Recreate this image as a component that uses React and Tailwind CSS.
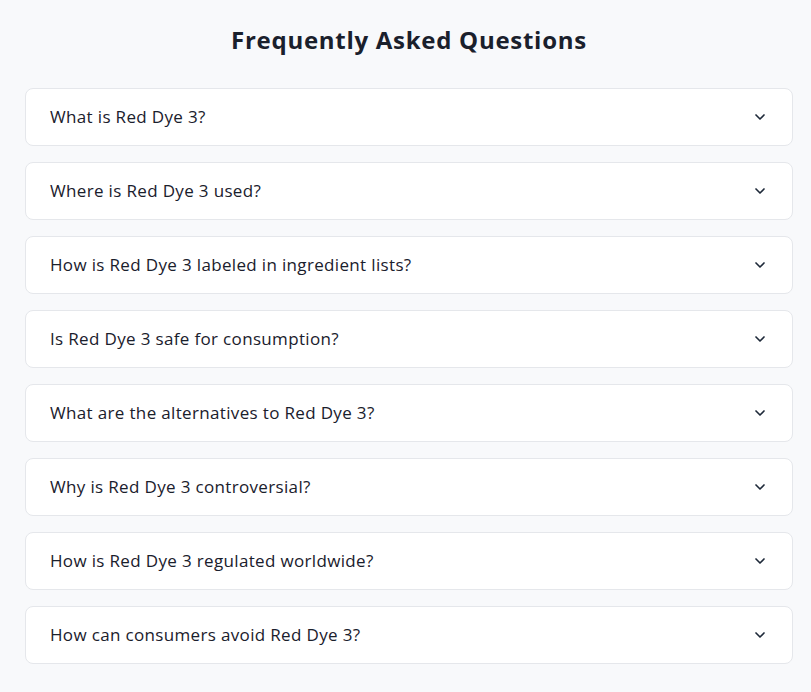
import { ChevronDown } from 'lucide-react';

const questions = [
  'What is Red Dye 3?',
  'Where is Red Dye 3 used?',
  'How is Red Dye 3 labeled in ingredient lists?',
  'Is Red Dye 3 safe for consumption?',
  'What are the alternatives to Red Dye 3?',
  'Why is Red Dye 3 controversial?',
  'How is Red Dye 3 regulated worldwide?',
  'How can consumers avoid Red Dye 3?',
];

export default function App() {
  return (
    <div className="min-h-screen bg-[#f8f9fb] pt-6 pb-8 pl-[25px] pr-[18px] font-['Open_Sans',sans-serif]">
      <h1 className="mb-8 text-center text-2xl font-bold tracking-[0.03em] text-[#1a202c]">Frequently Asked Questions</h1>
      <div className="flex flex-col gap-4">
        {questions.map((q) => (
          <button
            key={q}
            className="flex w-full items-center justify-between rounded-lg border border-gray-200 bg-white px-6 py-4 text-left"
          >
            <span className="text-[17px] leading-6 font-medium tracking-[0.02em] text-[#1a202c]">{q}</span>
            <ChevronDown size={16} strokeWidth={2.5} className="text-gray-800" />
          </button>
        ))}
      </div>
    </div>
  );
}
